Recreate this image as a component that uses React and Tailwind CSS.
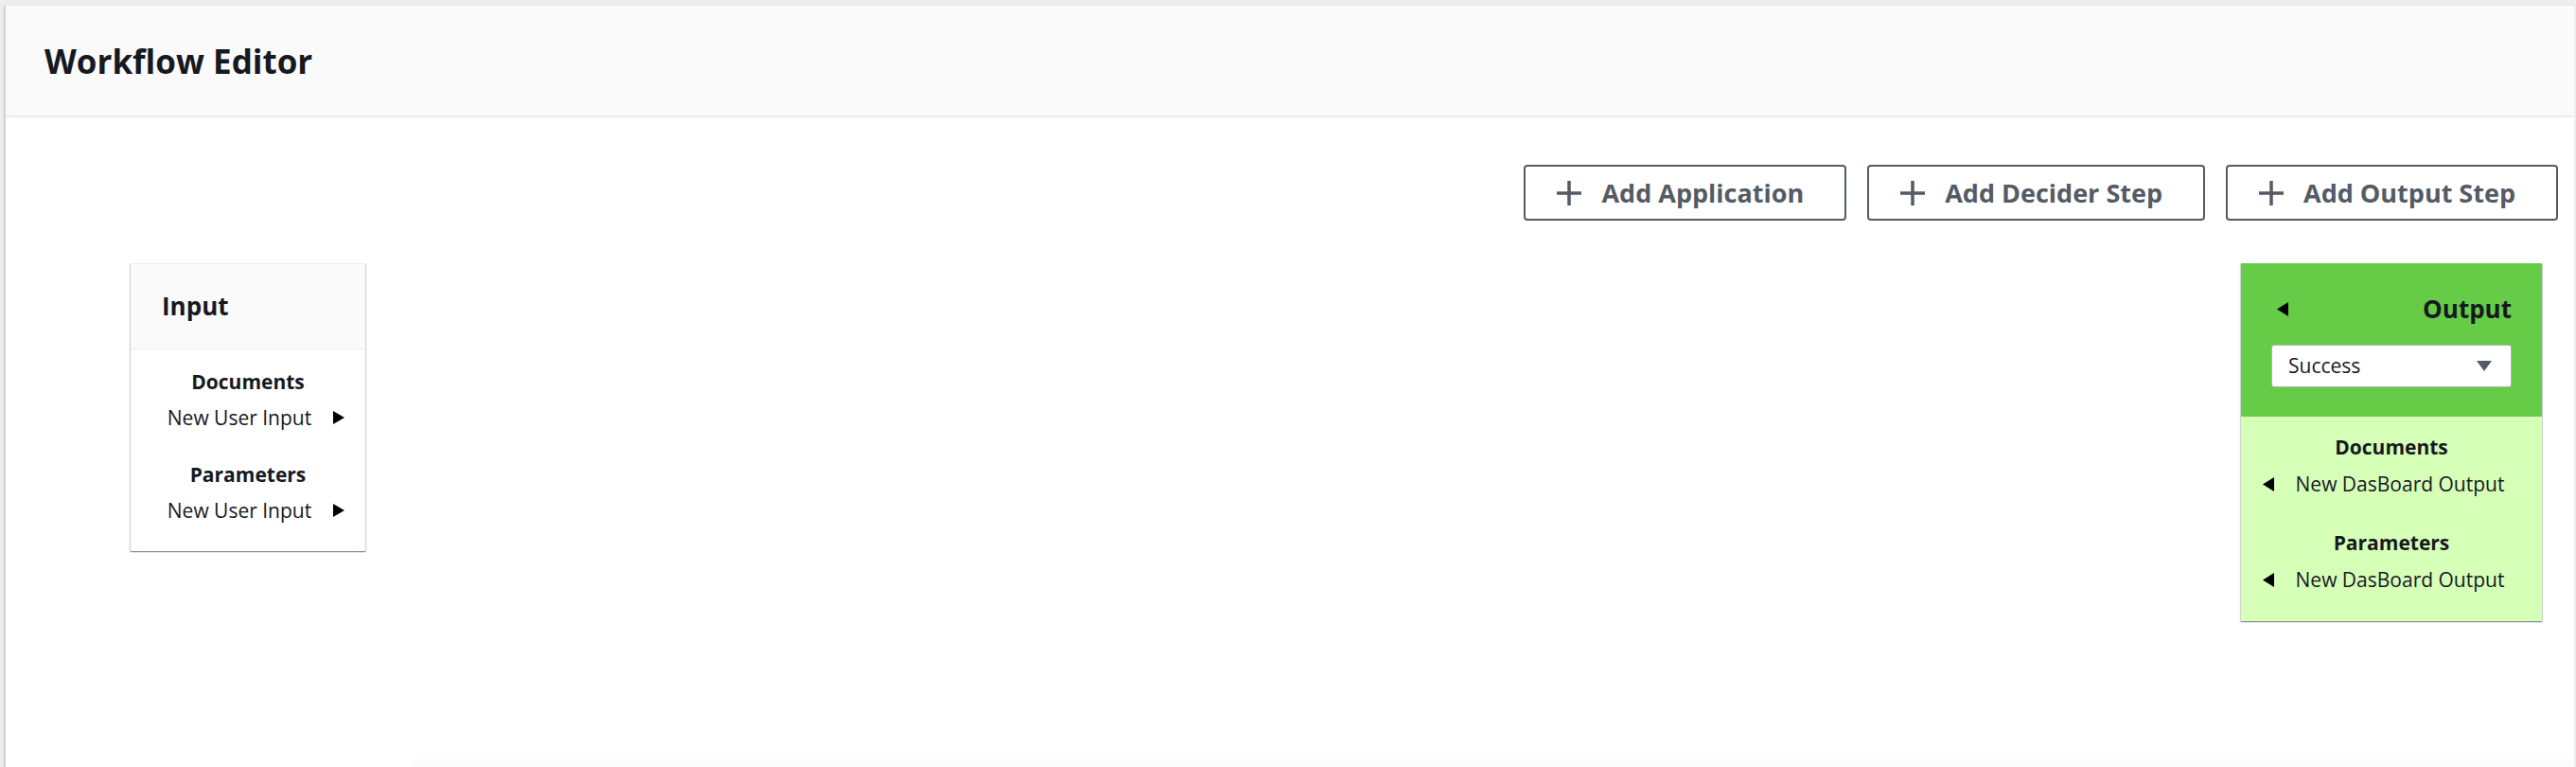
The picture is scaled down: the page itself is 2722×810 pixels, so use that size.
import React from 'react';

const font = { fontFamily: '"Open Sans", "Noto Sans", Arial, sans-serif' };

function Plus() {
    return (
        <svg width="28" height="28" viewBox="0 0 28 28" className="shrink-0">
            <path d="M14 1v26M1 14h26" stroke="#545b64" strokeWidth="3.5" fill="none" />
        </svg>
    );
}

function ArrowRight() {
    return (
        <svg width="12" height="14" viewBox="0 0 12 14" className="shrink-0">
            <polygon points="0,0 12,7 0,14" fill="#000" />
        </svg>
    );
}

function ArrowLeft() {
    return (
        <svg width="12" height="15" viewBox="0 0 12 15" className="shrink-0">
            <polygon points="12,0 0,7.5 12,15" fill="#000" />
        </svg>
    );
}

function ToolButton({ label }) {
    return (
        <button className="h-[59px] flex items-center gap-[20px] pl-[32px] pr-[43px] border-2 border-[#545b64] rounded-[4px] bg-white text-[#545b64] text-[27px] font-bold leading-none">
            <Plus />
            <span>{label}</span>
        </button>
    );
}

function InputCard() {
    const groups = ['Documents', 'Parameters'];
    return (
        <div className="w-[248px] bg-white border-t border-[#eaeded] shadow-[0_1px_1px_0_rgba(0,28,36,0.3),1px_1px_1px_0_rgba(0,28,36,0.15),-1px_1px_1px_0_rgba(0,28,36,0.15)]">
            <div className="h-[90px] flex items-center pl-[33px] bg-[#fafafa] border-b border-[#eaeded]">
                <h2 className="text-[26px] font-bold text-[#16191f]">Input</h2>
            </div>
            <div className="pt-[15px] pb-[24px] flex flex-col gap-[22px]">
                {groups.map((g) => (
                    <div key={g} className="flex flex-col text-[21px] leading-[38px] text-[#16191f]">
                        <div className="text-center font-bold">{g}</div>
                        <div className="flex items-center justify-center gap-[23px] pl-[17px]">
                            <span>New User Input</span>
                            <ArrowRight />
                        </div>
                    </div>
                ))}
            </div>
        </div>
    );
}

function OutputCard() {
    const groups = ['Documents', 'Parameters'];
    return (
        <div className="w-[318px] shadow-[0_1px_1px_0_rgba(0,28,36,0.3),1px_1px_1px_0_rgba(0,28,36,0.15),-1px_1px_1px_0_rgba(0,28,36,0.15)]">
            <div className="h-[162px] bg-[#66cc47] px-[32px] pt-[28px] flex flex-col gap-[18px]">
                <div className="h-[40px] flex items-center justify-between">
                    <span className="ml-[6px]"><ArrowLeft /></span>
                    <h2 className="text-[26px] font-bold text-[#16191f]">Output</h2>
                </div>
                <div className="h-[45px] bg-white border border-[#aab7b8] rounded-[3px] flex items-center justify-between pl-[17px] pr-[20px]">
                    <span className="text-[21px] text-[#16191f]">Success</span>
                    <svg width="16" height="11" viewBox="0 0 16 11">
                        <polygon points="0,0 16,0 8,11" fill="#545b64" />
                    </svg>
                </div>
            </div>
            <div className="bg-[#d6ffb8] pt-[13px] pb-[24px] flex flex-col gap-[23px]">
                {groups.map((g) => (
                    <div key={g} className="flex flex-col text-[21px] leading-[39px] text-[#16191f]">
                        <div className="text-center font-bold">{g}</div>
                        <div className="flex items-center justify-center gap-[23px] pr-[17px]">
                            <ArrowLeft />
                            <span>New DasBoard Output</span>
                        </div>
                    </div>
                ))}
            </div>
        </div>
    );
}

export default function App() {
    return (
        <div className="h-[810px] bg-[#eceeee] pt-[6px] pl-[5px] pr-[2px] overflow-hidden" style={font}>
            <div className="h-full bg-white flex flex-col shadow-[-1px_0_1px_0_rgba(0,28,36,0.15)] border-l border-[#d5dbdb]">
                <div className="h-[118px] shrink-0 flex items-center pl-[41px] bg-[#fafafa] border-b-2 border-[#eaeded]">
                    <h1 className="text-[35px] font-bold text-[#16191f] leading-none">Workflow Editor</h1>
                </div>

                <div className="flex justify-end gap-[22px] pt-[50px] pr-[17px]">
                    <ToolButton label="Add Application" />
                    <ToolButton label="Add Decider Step" />
                    <ToolButton label="Add Output Step" />
                </div>

                <div className="flex-1 flex justify-between items-start pt-[45px] pl-[132px] pr-[34px]">
                    <InputCard />
                    <OutputCard />
                </div>

                <div className="h-[22px] ml-[430px] rounded-tl-[40px] bg-gradient-to-b from-white to-[#fbfbfb]" />
            </div>
        </div>
    );
}
